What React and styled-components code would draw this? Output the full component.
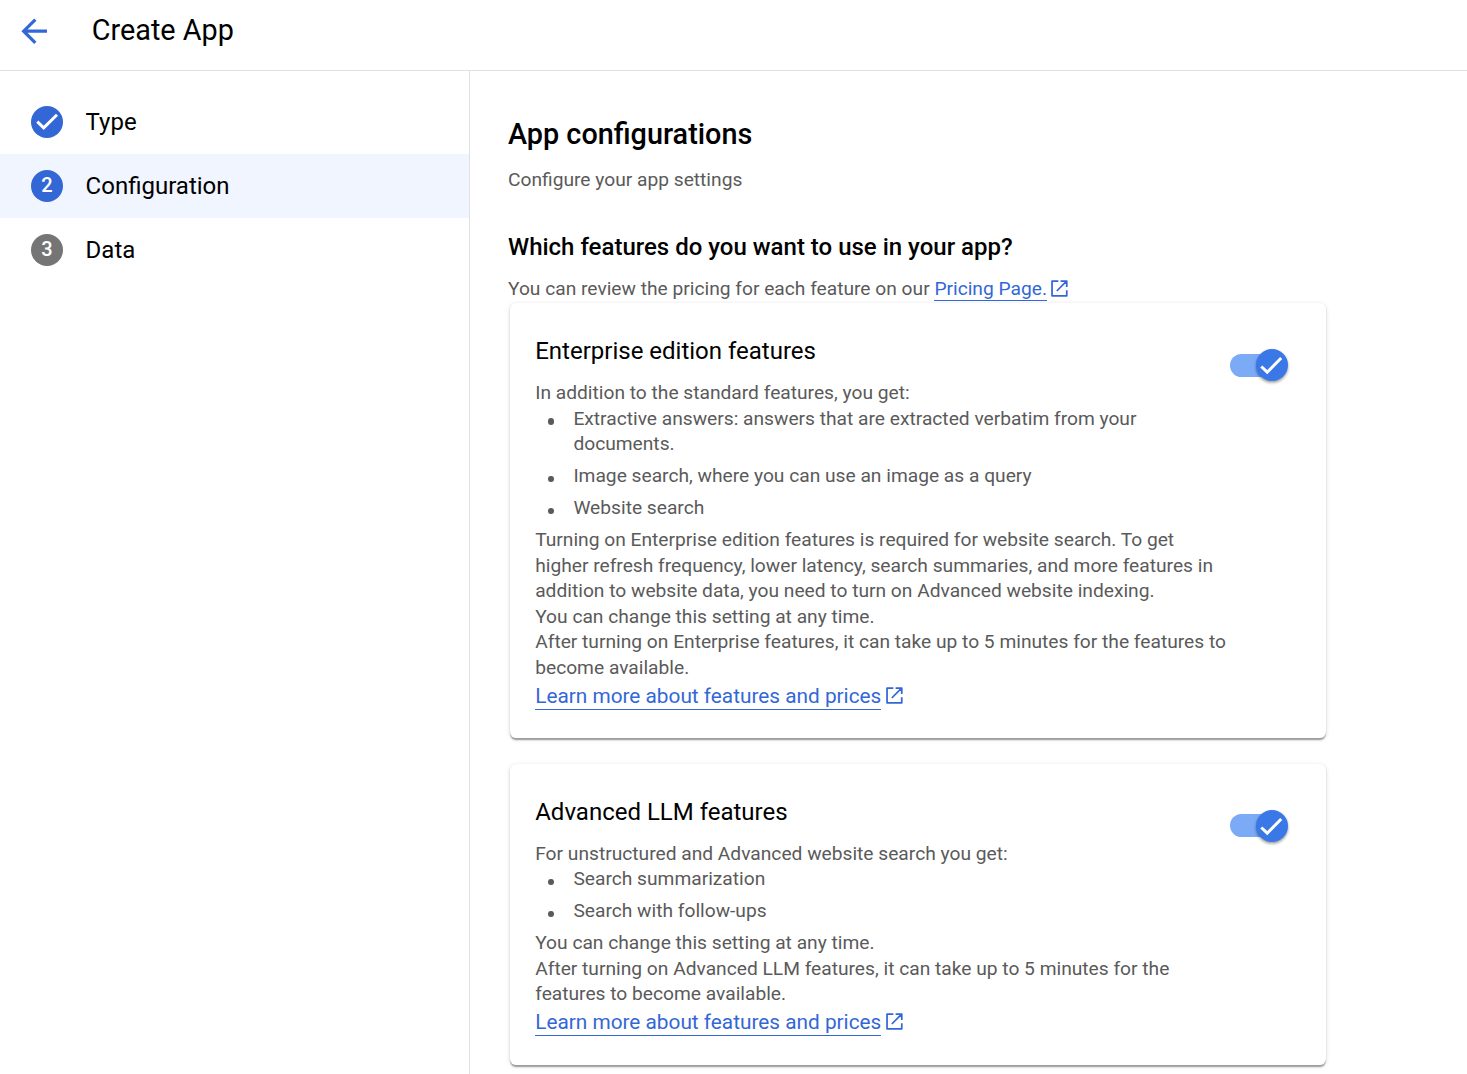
import React from 'react';
import styled, { createGlobalStyle, css } from 'styled-components';

const GlobalStyle = createGlobalStyle`
  * { box-sizing: border-box; }
  body { margin: 0; background: #fff; color: #000; font-family: Roboto, "Liberation Sans", sans-serif; overflow: hidden; -webkit-font-smoothing: antialiased; }
  h1, h2, h3, p, ul { margin: 0; padding: 0; font-weight: 400; }
`;
const Page = styled.div`display: flex; flex-direction: column; height: 1074px; overflow: hidden;`;
const Header = styled.header`
  display: flex; align-items: center; flex: none; height: 71px;
  padding: 0 0 8px 15px; gap: 38.4px; border-bottom: 1px solid #e0e0e0;
`;
const BackIcon = styled.svg`width: 38.4px; height: 38.4px; fill: #3367d6; flex: none;`;
const HeaderTitle = styled.h1`font-size: 28.8px; line-height: 38px; padding-bottom: 2px;`;
const Body = styled.div`display: flex; flex: 1; min-height: 0;`;
const Sidebar = styled.nav`width: 470px; flex: none; padding-top: 19px; border-right: 1px solid #e0e0e0;`;
const Step = styled.div`
  display: flex; align-items: center; height: 64px; padding-left: 31px; gap: 22.6px;
  font-size: 24px;
  background: ${(p) => (p.$active ? '#f0f5ff' : 'transparent')};
`;
const StepBadge = styled.span`
  display: flex; align-items: center; justify-content: center; width: 32px; height: 32px;
  border-radius: 50%; color: #fff; font-size: 20px; font-weight: 500; line-height: 30px;
  background: ${(p) => (p.$done ? '#3367d6' : '#757575')};
`;
const StepNumber = styled.span`height: 32px;`;
const Main = styled.main`flex: 1; padding: 44px 0 0 38px;`;
const PageTitle = styled.h1`font-size: 28.8px; line-height: 38px; font-weight: 500;`;
const Text = styled.p`font-size: 19.2px; line-height: 25.6px; color: #5a5a5a;`;
const Subtitle = styled(Text)`margin-top: 14px;`;
const Question = styled.h2`margin-top: 38px; font-size: 24px; line-height: 32px; font-weight: 500;`;
const PricingNote = styled(Text)`margin-top: 13px;`;
const Link = styled.a`
  display: inline-flex; align-items: flex-start; gap: ${(p) => (p.$large ? 3 : 2.4)}px;
  color: #3367d6; text-decoration: none; vertical-align: top;
  ${(p) => p.$large && css`font-size: 20.8px; line-height: 25px; margin-top: 3px;`}
`;
const LinkLabel = styled.span`border-bottom: 1px solid #3367d6; height: ${(p) => p.$height}px; white-space: nowrap;`;
const LinkIcon = styled.svg`
  width: 20.8px; height: 20.8px; fill: none; stroke: #3367d6; stroke-width: 2; stroke-linejoin: round;
  margin-top: ${(p) => (p.$large ? 1.2 : 2)}px;
`;
const Card = styled.section`
  display: flex; justify-content: space-between; width: 816px; height: ${(p) => p.$height}px;
  margin: 2px 0 25.62px 2px; padding: 32px 38px 0 25.2px; border-radius: 6.4px; background: #fff;
  box-shadow: 0 3.2px 1.6px -1.6px rgba(0,0,0,.2), 0 1.6px 1.6px rgba(0,0,0,.2), 0 1px 4.8px rgba(0,0,0,.12);
`;
const CardBody = styled.div`width: 695px; flex: none;`;
const CardTitle = styled.h3`font-size: 24px; line-height: 32px; margin-bottom: 12.76px;`;
const List = styled.ul`list-style: none;`;
const Item = styled.li`
  display: flex; padding: 0 0 6.4px 13px; font-size: 19.2px; line-height: 25.6px; color: #5a5a5a;
  &::before { content: ''; flex: none; width: 6px; height: 6.4px; margin: 12.6px 19.2px 0 0; border-radius: 50%; background: #5a5a5a; }
`;
const Switch = styled.div`display: flex; align-items: center; width: 58px; height: 32px; margin-top: 14px;`;
const Track = styled.span`width: 51px; height: 23px; border-radius: 12px; background: #7baaf7; flex: none;`;
const Thumb = styled.span`
  display: flex; flex: none; width: 32px; height: 32px; margin-left: -25px;
  border-radius: 50%; background: #3b78e7; box-shadow: 0 1.6px 3px rgba(0,0,0,.4);
`;
const CheckIcon = styled.svg`width: 32px; height: 32px; fill: none; stroke: #fff; stroke-width: 3;`;

const External = ({ large }) => (
  <LinkIcon $large={large} viewBox="0 0 24 24"><path d="M10.8 3.5H3.5v17h17V14M13.4 3.5h7.1V10.4M20 4 9 15" /></LinkIcon>
);
const ExternalLink = ({ large, children }) => (
  <Link href="#" $large={large}><LinkLabel $height={large ? 26 : 25}>{children}</LinkLabel><External large={large} /></Link>
);
const Toggle = () => (
  <Switch role="switch" aria-checked="true">
    <Track />
    <Thumb><CheckIcon viewBox="0 0 32 32"><path d="M5.3 17.5 11.2 23.2 25.2 9" /></CheckIcon></Thumb>
  </Switch>
);

const cards = [
  {
    title: 'Enterprise edition features', height: 435,
    intro: 'In addition to the standard features, you get:',
    items: ['Extractive answers: answers that are extracted verbatim from your documents.', 'Image search, where you can use an image as a query', 'Website search'],
    notes: [
      'Turning on Enterprise edition features is required for website search. To get higher refresh frequency, lower latency, search summaries, and more features in addition to website data, you need to turn on Advanced website indexing.',
      'You can change this setting at any time.',
      'After turning on Enterprise features, it can take up to 5 minutes for the features to become available.',
    ],
  },
  {
    title: 'Advanced LLM features', height: 301,
    intro: 'For unstructured and Advanced website search you get:',
    items: ['Search summarization', 'Search with follow-ups'],
    notes: ['You can change this setting at any time.', 'After turning on Advanced LLM features, it can take up to 5 minutes for the features to become available.'],
  },
];

export default function App() {
  return (
    <>
      <GlobalStyle />
      <Page>
        <Header>
          <BackIcon viewBox="0 0 24 24"><path d="M20 11H7.83l5.59-5.59L12 4l-8 8 8 8 1.41-1.41L7.83 13H20v-2z" /></BackIcon>
          <HeaderTitle>Create App</HeaderTitle>
        </Header>
        <Body>
          <Sidebar>
            <Step>
              <StepBadge $done><CheckIcon viewBox="0 0 32 32"><path d="M6.3 15.7 12.7 21.8 26 8.8" /></CheckIcon></StepBadge>
              Type
            </Step>
            <Step $active><StepBadge $done><StepNumber>2</StepNumber></StepBadge>Configuration</Step>
            <Step><StepBadge><StepNumber>3</StepNumber></StepBadge>Data</Step>
          </Sidebar>
          <Main>
            <PageTitle>App configurations</PageTitle>
            <Subtitle>Configure your app settings</Subtitle>
            <Question>Which features do you want to use in your app?</Question>
            <PricingNote>You can review the pricing for each feature on our <ExternalLink>Pricing Page.</ExternalLink></PricingNote>
            {cards.map((c) => (
              <Card key={c.title} $height={c.height}>
                <CardBody>
                  <CardTitle>{c.title}</CardTitle>
                  <Text>{c.intro}</Text>
                  <List>{c.items.map((t) => <Item key={t}>{t}</Item>)}</List>
                  {c.notes.map((t) => <Text key={t}>{t}</Text>)}
                  <ExternalLink large>Learn more about features and prices</ExternalLink>
                </CardBody>
                <Toggle />
              </Card>
            ))}
          </Main>
        </Body>
      </Page>
    </>
  );
}
